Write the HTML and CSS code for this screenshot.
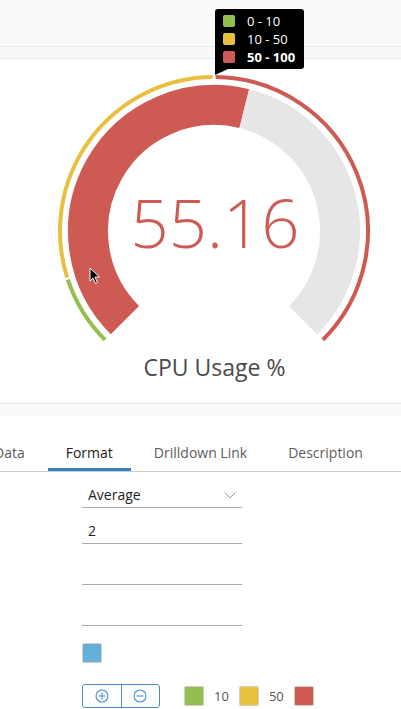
FILE: index.html
```html
<!DOCTYPE html>
<html>
<head>
<meta charset="utf-8">
<link rel="stylesheet" href="styles.css">
</head>
<body>
<div class="page">
  <div class="header"></div>
  <div class="strip"></div>
  <div class="panel">
    <svg class="gauge" width="401" height="290" viewBox="0 0 401 290">
      <path d="M124.9 261.1 A126 126 0 0 1 244.27 49.69" class="arc-value"/>
      <path d="M244.27 49.69 A126 126 0 0 1 303.1 261.1" class="arc-rest"/>
      <path d="M105.1 280.9 A154 154 0 0 1 67.87 220.6" class="band band-green"/>
      <path d="M67.21 218.57 A154 154 0 0 1 212.66 18.01" class="band band-yellow"/>
      <path d="M215.61 18.01 A154 154 0 0 1 322.9 280.9" class="band band-red"/>
      <text x="215" y="189" class="gauge-value">55.16</text>
    </svg>
    <div class="gauge-title">CPU Usage %</div>
  </div>
  <div class="strip2"></div>
  <div class="tabs">
    <div class="tab">Data</div>
    <div class="tab active">Format</div>
    <div class="tab">Drilldown Link</div>
    <div class="tab">Description</div>
  </div>
  <div class="form">
    <div class="field">
      <span>Average</span>
      <svg class="chev" width="12" height="7" viewBox="0 0 12 7"><path d="M0.5 0.5 L6 6 L11.5 0.5" /></svg>
    </div>
    <div class="field"><span>2</span></div>
    <div class="field tall"></div>
    <div class="field tall"></div>
    <div class="swatch swatch-blue"></div>
    <div class="controls">
      <div class="btn-group">
        <div class="btn">
          <svg width="14" height="14" viewBox="0 0 14 14"><circle cx="7" cy="7" r="6"/><path d="M7 3.5 V10.5 M3.5 7 H10.5"/></svg>
        </div>
        <div class="btn">
          <svg width="14" height="14" viewBox="0 0 14 14"><circle cx="7" cy="7" r="6"/><path d="M3.5 7 H10.5"/></svg>
        </div>
      </div>
      <div class="thresholds">
        <div class="swatch swatch-green"></div>
        <span class="th">10</span>
        <div class="swatch swatch-yellow"></div>
        <span class="th">50</span>
        <div class="swatch swatch-red"></div>
      </div>
    </div>
  </div>

  <div class="tooltip">
    <div class="tip-row"><span class="tip-sw green"></span><span>0 - 10</span></div>
    <div class="tip-row"><span class="tip-sw yellow"></span><span>10 - 50</span></div>
    <div class="tip-row bold"><span class="tip-sw red"></span><span>50 - 100</span></div>
  </div>

  <svg class="cursor" width="12" height="18" viewBox="0 0 12 18">
    <path d="M1 1 L1 14 L4 11 L6.5 16.5 L8.5 15.5 L6 10 L10.5 10 Z"/>
  </svg>
</div>
</body>
</html>
```

FILE: styles.css
```css
html, body {
  margin: 0;
  padding: 0;
  background: #fff;
}
body {
  font-family: "Open Sans", "DejaVu Sans", sans-serif;
  width: 401px;
  height: 709px;
  overflow: hidden;
}
.page {
  position: relative;
  width: 401px;
  height: 709px;
  overflow: hidden;
}
.header {
  height: 46px;
  background: #fafafa;
  border-bottom: 1px solid #ececec;
}
.strip {
  height: 11px;
  background: #f8f8f8;
  border-bottom: 1px solid #e3e7ee;
}
.panel {
  box-sizing: border-box;
  height: 345px;
  border-bottom: 1px solid #e6e6e6;
  display: flex;
  flex-direction: column;
  align-items: center;
}
.gauge {
  display: block;
  flex: none;
}
.arc-value {
  fill: none;
  stroke: #cd5b54;
  stroke-width: 40;
}
.arc-rest {
  fill: none;
  stroke: #e6e6e6;
  stroke-width: 40;
}
.band {
  fill: none;
  stroke-width: 4;
}
.band-green { stroke: #93bf51; }
.band-yellow { stroke: #e8c040; }
.band-red { stroke: #cd5b54; }
.gauge-value {
  font-family: "Open Sans", sans-serif;
  font-weight: 300;
  font-size: 67px;
  fill: #cd5b54;
  text-anchor: middle;
}
.gauge-title {
  margin-top: 4px;
  margin-left: 28px;
  font-size: 23px;
  line-height: 28px;
  color: #4a4a4a;
}
.strip2 {
  height: 12px;
  background: #f9f9f9;
}
.tabs {
  display: flex;
  gap: 5px;
  margin-left: -24px;
  border-bottom: 1px solid #cccccc;
  height: 55px;
}
.tab {
  box-sizing: border-box;
  height: 55px;
  padding: 27px 18px 5px;
  line-height: 20px;
  font-size: 14px;
  color: #5c5c5c;
  white-space: nowrap;
  border-bottom: 3px solid transparent;
}
.tab.active {
  color: #222;
  border-bottom-color: #3b7fc4;
}
.form {
  padding-left: 82px;
}
.field {
  box-sizing: border-box;
  width: 160px;
  height: 36px;
  display: flex;
  align-items: flex-end;
  justify-content: space-between;
  padding: 0 6px 2px;
  border-bottom: 1px solid #ababab;
  line-height: 20px;
  font-size: 14px;
  color: #1e1e1e;
}
.field.tall {
  height: 41px;
}
.chev {
  margin: 0 0 6px;
}
.chev path {
  fill: none;
  stroke: #9a9a9a;
  stroke-width: 1;
}
.swatch {
  box-sizing: border-box;
  width: 20px;
  height: 20px;
  border: 1px solid #cfcfcf;
  border-radius: 2px;
}
.swatch-blue {
  margin-top: 17px;
  background: #65b0da;
  width: 20px;
}
.swatch-green { background: #93bf51; }
.swatch-yellow { background: #e8c040; }
.swatch-red { background: #cd5b54; }
.controls {
  margin-top: 21px;
  display: flex;
  align-items: center;
  gap: 24px;
}
.btn-group {
  box-sizing: border-box;
  display: flex;
  width: 78px;
  height: 24px;
  border: 1px solid #4a8fcc;
  border-radius: 3px;
}
.btn {
  flex: 1;
  display: flex;
  align-items: center;
  justify-content: center;
}
.btn + .btn {
  border-left: 1px solid #4a8fcc;
}
.btn svg circle,
.btn svg path {
  fill: none;
  stroke: #4a8fcc;
  stroke-width: 1.1;
}
.thresholds {
  display: flex;
  align-items: center;
  gap: 10px;
}
.th {
  font-size: 13px;
  line-height: 20px;
  color: #555;
}
.tooltip {
  position: absolute;
  left: 215px;
  top: 9px;
  box-sizing: border-box;
  width: 89px;
  height: 60px;
  padding: 6px 0 0 8px;
  background: #000;
  border-radius: 3px 3px 3px 0;
  color: #fff;
  font-size: 13px;
}
.tooltip::after {
  content: "";
  position: absolute;
  left: 0;
  top: 100%;
  border-top: 6px solid #000;
  border-right: 13px solid transparent;
}
.tip-row {
  display: flex;
  align-items: center;
  gap: 12px;
  height: 18px;
  margin-top: -3px;
  padding-top: 3px;
}
.tip-row span:last-child {
  line-height: 18px;
  margin-top: -6px;
}
.tip-row.bold {
  font-weight: 700;
}
.tip-sw {
  width: 12px;
  height: 12px;
  border-radius: 2px;
  margin-top: -6px;
}
.tip-sw.green { background: #93bf51; }
.tip-sw.yellow { background: #e8c040; }
.tip-sw.red { background: #cd5b54; }
.cursor {
  position: absolute;
  left: 89px;
  top: 267px;
}
.cursor path {
  fill: #000;
  stroke: #fff;
  stroke-width: 1;
}
```
